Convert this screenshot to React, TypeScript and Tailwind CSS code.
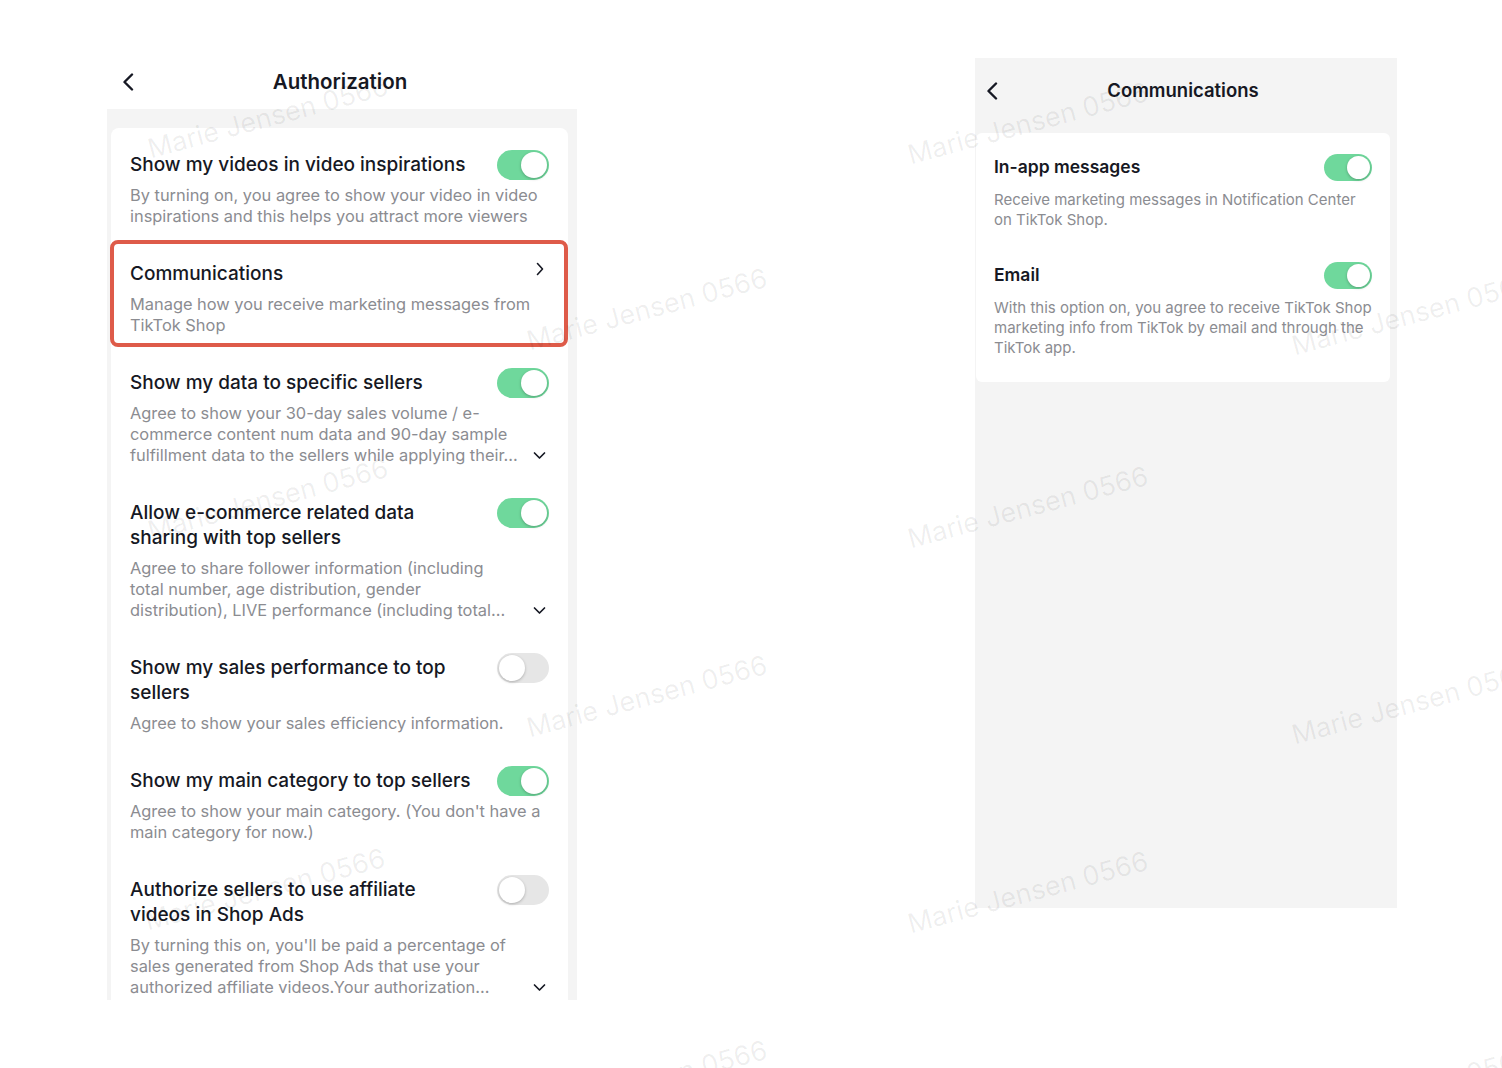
import React from 'react'

const FONT = { fontFamily: 'Inter, "Noto Sans", Roboto, sans-serif' }

type Row = {
  title: string
  desc: string
  on?: boolean
  link?: boolean
  more?: boolean
  narrow?: boolean
  marked?: boolean
}

// collapsed rows show only the first three lines, ending with "..."
const rows: Row[] = [
  {
    title: 'Show my videos in video inspirations',
    desc: 'By turning on, you agree to show your video in video inspirations and this helps you attract more viewers',
    on: true,
  },
  {
    title: 'Communications',
    desc: 'Manage how you receive marketing messages from TikTok Shop',
    link: true,
    marked: true,
  },
  {
    title: 'Show my data to specific sellers',
    desc: 'Agree to show your 30-day sales volume / e-commerce content num data and 90-day sample fulfillment data to the sellers while applying their...',
    on: true,
    more: true,
  },
  {
    title: 'Allow e-commerce related data sharing with top sellers',
    desc: 'Agree to share follower information (including total number, age distribution, gender distribution), LIVE performance (including total...',
    on: true,
    more: true,
    narrow: true,
  },
  {
    title: 'Show my sales performance to top sellers',
    desc: 'Agree to show your sales efficiency information.',
    on: false,
  },
  {
    title: 'Show my main category to top sellers',
    desc: "Agree to show your main category. (You don't have a main category for now.)",
    on: true,
  },
  {
    title: 'Authorize sellers to use affiliate videos in Shop Ads',
    desc: "By turning this on, you'll be paid a percentage of sales generated from Shop Ads that use your authorized affiliate videos.Your authorization...",
    on: false,
    more: true,
  },
]

const marks = [
  { x: 268, y: 118 },
  { x: 1028, y: 124 },
  { x: 647, y: 310 },
  { x: 1412, y: 315 },
  { x: 268, y: 500 },
  { x: 1028, y: 508 },
  { x: 647, y: 697 },
  { x: 1412, y: 704 },
  { x: 265, y: 890 },
  { x: 1028, y: 893 },
  { x: 647, y: 1082 },
  { x: 1412, y: 1090 },
]

function BackIcon() {
  return (
    <svg width="12" height="18" viewBox="0 0 12 18" fill="none">
      <path d="M10 1.5 L2.5 9 L10 16.5" stroke="#161823" strokeWidth="2.4" strokeLinecap="round" strokeLinejoin="round" />
    </svg>
  )
}

function Toggle({ on, small }: { on?: boolean; small?: boolean }) {
  return (
    <div
      className={`flex shrink-0 items-center rounded-full p-[2px] ${small ? 'h-[27px] w-[48px]' : 'h-[30px] w-[52px]'} ${on ? 'justify-end bg-[#6fd89c]' : 'justify-start bg-[#e6e6e6]'}`}
    >
      <div
        className={`rounded-full bg-white shadow-[0_1px_3px_rgba(0,0,0,0.25)] ${small ? 'size-[23px]' : 'size-[26px]'}`}
      />
    </div>
  )
}

function SettingRow({ row }: { row: Row }) {
  const descW = row.more ? (row.narrow ? 'w-[385px]' : 'w-[399px]') : 'w-full'
  return (
    <div className="relative px-[19px] py-[17px]">
      {row.marked && (
        <div className="pointer-events-none absolute -top-[4px] bottom-[6px] -left-[1px] right-0 rounded-[8px] border-[4px] border-[#de5b49]" />
      )}
      <div className="flex items-start justify-between gap-4">
        <div className="w-[351px] text-[19px] leading-[25px] font-medium text-[#161823]">{row.title}</div>
        <div className="flex h-[25px] items-center">
          {row.link ? (
            <svg width="10" height="14" viewBox="0 0 10 14" fill="none" className="-mt-[10px] mr-[4px]">
              <path d="M2.5 1.5 L7.5 7 L2.5 12.5" stroke="#161823" strokeWidth="1.6" strokeLinecap="round" strokeLinejoin="round" />
            </svg>
          ) : (
            <Toggle on={row.on} />
          )}
        </div>
      </div>
      <div className="mt-2 flex items-end justify-between">
        <p className={`text-[16.4px] leading-[21px] text-[#8b8c91] ${descW}`}>{row.desc}</p>
        {row.more && (
          <div className="flex h-[21px] w-[20px] items-center justify-center">
            <svg width="13" height="9" viewBox="0 0 13 9" fill="none">
              <path d="M1.5 2 L6.5 7 L11.5 2" stroke="#161823" strokeWidth="1.7" strokeLinecap="round" strokeLinejoin="round" />
            </svg>
          </div>
        )}
      </div>
    </div>
  )
}

function CommRow({ title, desc, className = '' }: { title: string; desc: string; className?: string }) {
  return (
    <div className={className}>
      <div className="flex items-start justify-between">
        <div className="text-[17.5px] leading-[22px] font-semibold text-[#161823]">{title}</div>
        <div className="flex h-[22px] items-center">
          <Toggle on small />
        </div>
      </div>
      <p className="mt-[12px] text-[15px] leading-[20px] text-[#8b8c91]">{desc}</p>
    </div>
  )
}

export default function App() {
  return (
    <div className="relative h-[1068px] w-full overflow-hidden bg-white" style={FONT}>
      <div className="flex items-start pt-[55px] pl-[107px]">
        {/* Authorization screen */}
        <div className="flex h-[945px] w-[470px] flex-col">
          <div className="flex h-[54px] items-center">
            <div className="flex w-[44px] justify-start pl-[15px]">
              <BackIcon />
            </div>
            <div className="flex-1 pr-[4px] text-center text-[20.5px] font-semibold text-[#161823]">Authorization</div>
            <div className="w-[44px]" />
          </div>
          <div className="flex-1 overflow-hidden bg-[#f4f4f4] pt-[19px] pr-[9px] pl-[4px]">
            <div className="h-full rounded-t-[8px] bg-white pt-[7px]">
              {rows.map((r) => (
                <SettingRow key={r.title} row={r} />
              ))}
            </div>
          </div>
        </div>

        {/* Communications screen */}
        <div className="mt-[3px] ml-[398px] flex h-[850px] w-[422px] flex-col bg-[#f4f4f4]">
          <div className="flex h-[66px] items-center">
            <div className="flex w-[46px] justify-start pl-[11px]">
              <BackIcon />
            </div>
            <div className="flex-1 text-center text-[18.5px] font-semibold text-[#161823]">Communications</div>
            <div className="w-[52px]" />
          </div>
          <div className="mt-[9px] mr-[7px] ml-[1px] rounded-[6px] bg-white px-[18px] pt-[23px] pb-[24px]">
            <CommRow
              title="In-app messages"
              desc="Receive marketing messages in Notification Center on TikTok Shop."
            />
            <CommRow
              className="mt-[34px]"
              title="Email"
              desc="With this option on, you agree to receive TikTok Shop marketing info from TikTok by email and through the TikTok app."
            />
          </div>
        </div>
      </div>

      {/* watermark */}
      {marks.map((m, i) => (
        <div
          key={i}
          className="pointer-events-none absolute text-[27px] whitespace-nowrap text-black/[0.065] select-none"
          style={{ left: m.x, top: m.y, transform: 'translate(-50%, -50%) rotate(-15deg)' }}
        >
          Marie Jensen 0566
        </div>
      ))}
    </div>
  )
}
